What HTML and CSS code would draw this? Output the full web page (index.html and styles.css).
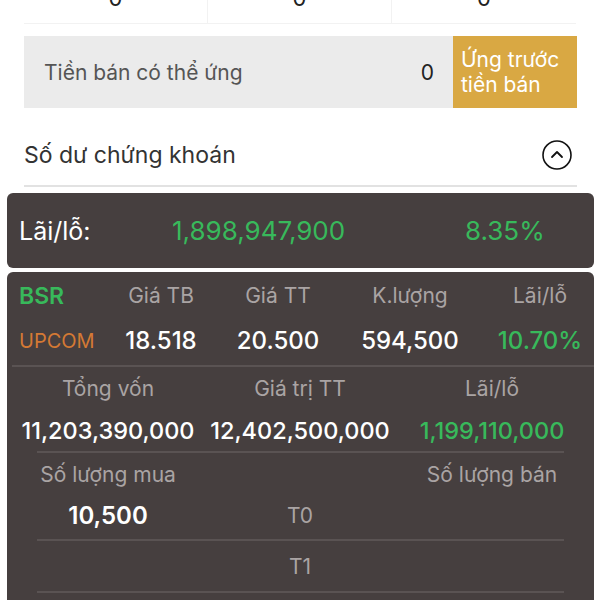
FILE: index.html
```html
<!DOCTYPE html>
<html lang="vi">
<head>
  <meta charset="UTF-8">
  <meta name="viewport" content="width=device-width, initial-scale=1.0">
  <title>Số dư chứng khoán</title>
  <link rel="stylesheet" href="styles.css">
</head>
<body>

<div class="page">
  <div class="summary">
    <div class="summary-cell">0</div>
    <div class="summary-cell">0</div>
    <div class="summary-cell">0</div>
  </div>

  <div class="advance">
    <div class="advance-label">Tiền bán có thể ứng</div>
    <div class="advance-value">0</div>
    <button class="advance-btn">Ứng trước<br>tiền bán</button>
  </div>

  <div class="section-head">
    <span>Số dư chứng khoán</span>
    <svg class="toggle" width="32" height="32" viewBox="0 0 32 32">
      <circle cx="16" cy="16" r="14" fill="none" stroke="#111" stroke-width="1.6"/>
      <path d="M11 18 L16 13 L21 18" fill="none" stroke="#111" stroke-width="1.8" stroke-linecap="round" stroke-linejoin="round"/>
    </svg>
  </div>

  <div class="card total">
    <div class="total-label">Lãi/lỗ:</div>
    <div class="total-value up">1,898,947,900</div>
    <div class="total-pct up">8.35%</div>
  </div>

  <div class="card stock">
    <div class="stock-grid">
      <div class="code up">BSR</div>
      <div class="head">Giá TB</div>
      <div class="head">Giá TT</div>
      <div class="head">K.lượng</div>
      <div class="head last">Lãi/lỗ</div>

      <div class="market">UPCOM</div>
      <div class="val">18.518</div>
      <div class="val">20.500</div>
      <div class="val">594,500</div>
      <div class="val last up">10.70%</div>
    </div>

    <div class="line wide"></div>

    <div class="three">
      <div class="head">Tổng vốn</div>
      <div class="head">Giá trị TT</div>
      <div class="head">Lãi/lỗ</div>
      <div class="val big">11,203,390,000</div>
      <div class="val big">12,402,500,000</div>
      <div class="val big up">1,199,110,000</div>
    </div>

    <div class="line"></div>

    <div class="three qty">
      <div class="head">Số lượng mua</div>
      <div class="head"></div>
      <div class="head">Số lượng bán</div>
      <div class="val bold">10,500</div>
      <div class="head">T0</div>
      <div class="val"></div>
    </div>

    <div class="line"></div>

    <div class="three settle">
      <div class="val"></div>
      <div class="head">T1</div>
      <div class="val"></div>
    </div>

    <div class="line"></div>
  </div>
</div>

</body>
</html>
```

FILE: styles.css
```css
body {
  margin: 0;
  background: #fff;
  font-family: Inter, 'Noto Sans', sans-serif;
  color: #222;
}

.page {
  margin-top: -30px;
}

.summary {
  display: grid;
  grid-template-columns: repeat(3, 1fr);
  margin: 0 24px;
  border-bottom: 1px solid #f2f2f2;
}

.summary-cell {
  height: 53px;
  box-sizing: border-box;
  padding-top: 15px;
  text-align: center;
  font-size: 22px;
  line-height: 26px;
  border-right: 1px solid #f2f2f2;
}

.summary-cell:last-child { border-right: none; }

.advance {
  display: flex;
  align-items: stretch;
  margin: 12px 23px 0 24px;
  height: 72px;
  background: #ebebeb;
}

.advance-label {
  flex: 1;
  display: flex;
  align-items: center;
  padding-left: 20px;
  font-size: 21px;
  color: #555;
}

.advance-value {
  display: flex;
  align-items: center;
  padding-right: 19px;
  font-size: 21px;
  color: #222;
}

.advance-btn {
  width: 124px;
  border: none;
  background: #d9a843;
  color: #fff;
  font-family: inherit;
  font-size: 21px;
  line-height: 25px;
  text-align: left;
  padding: 0 8px;
}

.section-head {
  display: flex;
  align-items: center;
  justify-content: space-between;
  margin: 17px 23px 0 24px;
  height: 60px;
  border-bottom: 2px solid #e2e2e2;
  font-size: 23px;
  color: #333;
}

.toggle { margin-right: 4px; }

.card {
  background: #463f3f;
  border-radius: 6px;
  margin: 6px 6px 0 7px;
  color: #fff;
}

.up { color: #38b95b; }

.total {
  display: grid;
  grid-template-columns: 153px 293px auto;
  align-items: center;
  height: 75px;
  padding-left: 12px;
}

.total-label { font-size: 25px; }

.total-value,
.total-pct { font-size: 26px; }

.stock {
  margin-top: 4px;
  padding-top: 1px;
  padding-bottom: 30px;
}

.head {
  color: #aaa4a4;
  font-size: 21px;
}

.val {
  font-size: 24px;
  font-weight: 500;
}

.val.big { font-size: 23.5px; }

.bold { font-weight: 600; }

.stock-grid {
  display: grid;
  grid-template-columns: 91px 102px 132px 132px 1fr;
  grid-auto-rows: 45px;
  align-items: center;
  padding-left: 12px;
  text-align: center;
}

.stock-grid .code {
  text-align: left;
  font-size: 23px;
  font-weight: 600;
}

.stock-grid .market {
  text-align: left;
  font-size: 20px;
  color: #d47934;
}

.stock-grid .last { padding-left: 10px; }

.three {
  display: grid;
  grid-template-columns: repeat(3, 1fr);
  grid-auto-rows: 42px;
  align-items: center;
  padding: 0 6px 0 5px;
  text-align: center;
}

.three.qty {
  grid-template-rows: 42px 40px;
  padding-bottom: 4px;
}

.three.settle {
  grid-auto-rows: 50px;
}

.line {
  height: 2px;
  background: #5a5353;
  margin: 0 30px;
}

.line.wide {
  margin: 2px 0 0 5px;
}
```
